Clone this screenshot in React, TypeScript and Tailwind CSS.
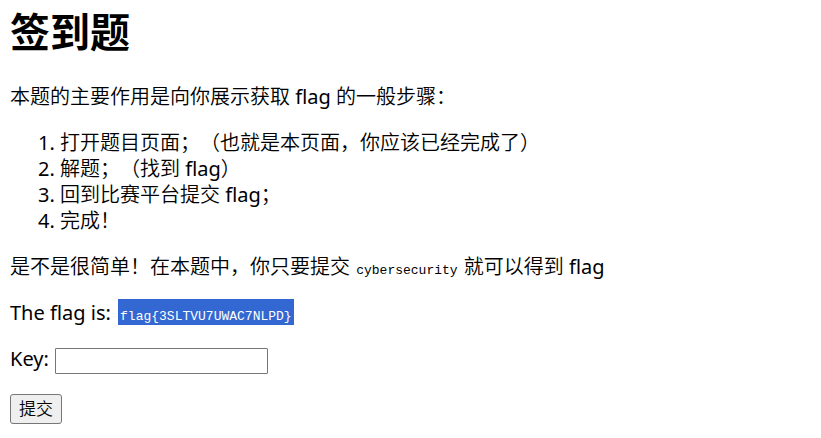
import React from "react";

const steps = [
  "打开题目页面；（也就是本页面，你应该已经完成了）",
  "解题；（找到 flag）",
  "回到比赛平台提交 flag；",
  "完成！",
];

export default function App() {
  return (
    <main
      lang="zh-CN"
      className="min-h-screen bg-white px-[10px] pt-[4px] pb-3 font-['Noto_Sans','Noto_Sans_CJK_SC_DemiLight','Noto_Sans_CJK_SC_Light','Noto_Sans_CJK_SC',sans-serif] text-[20px] leading-[26px] text-black [text-spacing-trim:space-all]"
    >
      <h1 className="font-['Noto_Sans','Noto_Sans_CJK_SC',sans-serif] text-[40px] leading-[56px] font-bold">签到题</h1>
      <p className="mt-6">本题的主要作用是向你展示获取 flag 的一般步骤：</p>
      <ol className="mt-5 list-decimal pl-[50px]">
        {steps.map((step) => (
          <li key={step}>{step}</li>
        ))}
      </ol>
      <p className="mt-5">
        是不是很简单！在本题中，你只要提交{" "}
        <code className="px-px font-['Liberation_Mono',monospace] text-[13px] leading-none">cybersecurity</code>{" "}
        就可以得到 flag
      </p>
      <p className="mt-5">
        The flag is:{" "}
        <code className="ml-[2px] bg-[#3367d1] px-[2px] pt-[10px] pb-px font-['Liberation_Mono',monospace] text-[13px] leading-none text-white">
          {"flag{3SLTVU7UWAC7NLPD}"}
        </code>
      </p>
      <form className="mt-5" onSubmit={(e) => e.preventDefault()}>
        <div className="flex h-7 items-end gap-[6px]">
          <label htmlFor="key" className="self-start">
            Key:
          </label>
          <input
            id="key"
            type="text"
            className="h-[26px] w-[213px] rounded-[1px] border border-[#767676] bg-white px-1 text-[16px]"
          />
        </div>
        <button
          type="submit"
          className="mt-5 h-[30px] rounded-[3px] border border-[#767676] bg-[#efefef] px-2 text-[17px] leading-[26px]"
        >
          提交
        </button>
      </form>
    </main>
  );
}
